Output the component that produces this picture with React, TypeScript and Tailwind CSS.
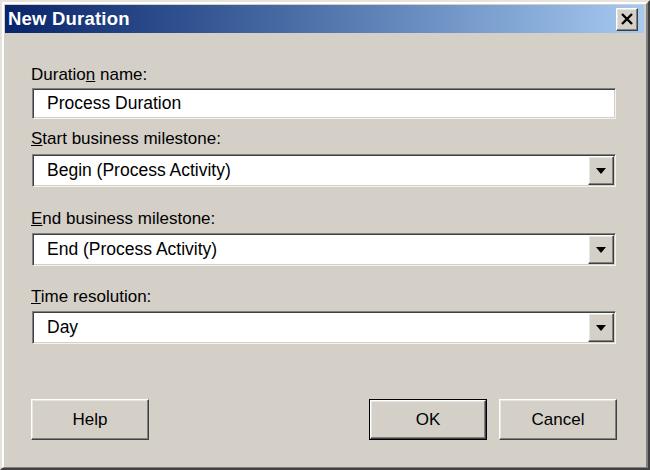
import React from 'react';

const font = { fontFamily: '"Liberation Sans", Arial, sans-serif' };

const raised =
  'bg-[#d4d0c8] border-t border-l border-t-white border-l-white border-r border-b border-r-[#404040] border-b-[#404040] shadow-[inset_-1px_-1px_0_#808080,inset_1px_1px_0_#e8e6e0]';

const sunken =
  'bg-white border-t border-l border-t-[#808080] border-l-[#808080] border-r border-b border-r-[#f4f2ee] border-b-[#f4f2ee] shadow-[inset_1px_1px_0_#404040,inset_-1px_-1px_0_#d4d0c8]';

const Label: React.FC<{ children: React.ReactNode; className?: string }> = ({ children, className }) => (
  <div className={`h-[20px] leading-[20px] text-[17px] text-black -ml-[1px] ${className ?? ''}`}>{children}</div>
);

const Combo: React.FC<{ value: string; className?: string }> = ({ value, className }) => (
  <div className={`w-[584px] h-[33px] flex items-center ${sunken} ${className ?? ''}`}>
    <span className="flex-1 pl-[14px] text-[17.5px] text-black">{value}</span>
    <div className={`w-[26px] h-[29px] mr-[1px] flex items-center justify-center ${raised}`}>
      <svg width="10" height="6" viewBox="0 0 10 6">
        <path d="M0 0H10L5 6Z" fill="#000" />
      </svg>
    </div>
  </div>
);

const Button: React.FC<{ label: string; isDefault?: boolean }> = ({ label, isDefault }) =>
  isDefault ? (
    <div className="w-[118px] h-[41px] border border-black flex">
      <div className={`flex-1 flex items-center justify-center text-[17px] text-black ${raised}`}>{label}</div>
    </div>
  ) : (
    <div className={`w-[118px] h-[41px] flex items-center justify-center text-[17px] text-black ${raised}`}>{label}</div>
  );

export default function App() {
  return (
    <div style={font} className="w-[650px] h-[470px] bg-[#d4d0c8] border-t-2 border-l-2 border-t-[#e6e3dc] border-l-[#e6e3dc] border-r-2 border-b-2 border-r-[#404040] border-b-[#404040] flex flex-col">
      <div className="flex-1 flex flex-col border-t-2 border-l-2 border-t-white border-l-white border-r-2 border-b border-r-[#808080] border-b-[#808080] pl-[1px] pt-[1px] pr-[2px]">
        <div className="h-[28px] flex items-center justify-between bg-gradient-to-r from-[#0a246a] to-[#a6caf0] pl-[3px] pr-[6px]">
          <span className="text-white font-bold text-[18.5px] leading-[28px] tracking-[0.2px]">New Duration</span>
          <div className={`w-[22px] h-[23px] flex items-center justify-center ${raised}`}>
            <svg width="12" height="12" viewBox="0 0 12 12">
              <path d="M1 1L11 11M11 1L1 11" stroke="#000" strokeWidth="2.4" />
            </svg>
          </div>
        </div>

        <div className="flex flex-col pl-[27px]">
          <Label className="mt-[32px]">
            Duratio<u>n</u> name:
          </Label>
          <div className={`w-[584px] h-[31px] mt-[3px] flex items-center pl-[14px] text-[17.5px] text-black ${sunken}`}>
            Process Duration
          </div>

          <Label className="mt-[10px]">
            <u>S</u>tart business milestone:
          </Label>
          <Combo value="Begin (Process Activity)" className="mt-[5px] h-[32px]" />

          <Label className="mt-[22px]">
            <u>E</u>nd business milestone:
          </Label>
          <Combo value="End (Process Activity)" className="mt-[4px]" />

          <Label className="mt-[21px]">
            <u>T</u>ime resolution:
          </Label>
          <Combo value="Day" className="mt-[4px]" />

          <div className="mt-[55px] -ml-[1px] w-[586px] flex items-center justify-between">
            <Button label="Help" />
            <div className="flex gap-[12px]">
              <Button label="OK" isDefault />
              <Button label="Cancel" />
            </div>
          </div>
        </div>
      </div>
    </div>
  );
}
